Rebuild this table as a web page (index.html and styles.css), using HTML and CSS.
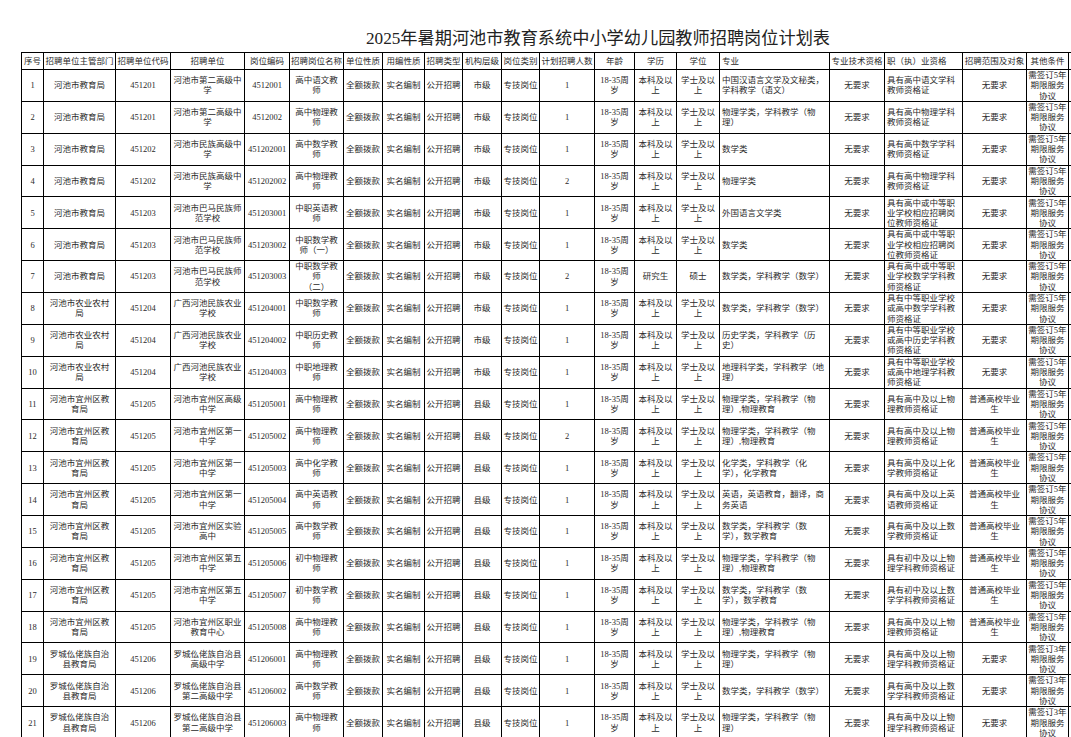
FILE: index.html
```html
<!DOCTYPE html>
<html lang="zh-CN">
<head>
<meta charset="utf-8">
<title>2025年暑期河池市教育系统中小学幼儿园教师招聘岗位计划表</title>
<link rel="stylesheet" href="styles.css">
</head>
<body>
<div class="page">
<h1 class="title">2025年暑期河池市教育系统中小学幼儿园教师招聘岗位计划表</h1>
<table class="plan">
<colgroup>
<col class="w-no"><col class="w-dept"><col class="w-code"><col class="w-unit"><col class="w-pcode"><col class="w-pname"><col class="w-nat"><col class="w-est"><col class="w-type"><col class="w-lvl"><col class="w-cat"><col class="w-num"><col class="w-age"><col class="w-edu"><col class="w-deg"><col class="w-major"><col class="w-tech"><col class="w-qual"><col class="w-scope"><col class="w-other"><col class="w-rest">
</colgroup>
<thead>
<tr><th>序号</th><th>招聘单位主管部门</th><th>招聘单位代码</th><th>招聘单位</th><th>岗位编码</th><th>招聘岗位名称</th><th>单位性质</th><th>用编性质</th><th>招聘类型</th><th>机构层级</th><th>岗位类别</th><th>计划招聘人数</th><th>年龄</th><th>学历</th><th>学位</th><th class="l">专业</th><th>专业技术资格</th><th class="l">职（执）业资格</th><th>招聘范围及对象</th><th>其他条件</th><th></th></tr>
</thead>
<tbody>
<tr><td>1</td><td>河池市教育局</td><td>451201</td><td>河池市第二高级中<br>学</td><td>4512001</td><td>高中语文教<br>师</td><td>全额拨款</td><td>实名编制</td><td>公开招聘</td><td>市级</td><td>专技岗位</td><td>1</td><td>18-35周<br>岁</td><td>本科及以<br>上</td><td>学士及以<br>上</td><td class="l">中国汉语言文学及文秘类，<br>学科教学（语文）</td><td>无要求</td><td class="l">具有高中语文学科<br>教师资格证</td><td>无要求</td><td class="oc">需签订5年<br>期限服务<br>协议</td><td></td></tr>
<tr><td>2</td><td>河池市教育局</td><td>451201</td><td>河池市第二高级中<br>学</td><td>4512002</td><td>高中物理教<br>师</td><td>全额拨款</td><td>实名编制</td><td>公开招聘</td><td>市级</td><td>专技岗位</td><td>1</td><td>18-35周<br>岁</td><td>本科及以<br>上</td><td>学士及以<br>上</td><td class="l">物理学类，学科教学（物<br>理）</td><td>无要求</td><td class="l">具有高中物理学科<br>教师资格证</td><td>无要求</td><td class="oc">需签订5年<br>期限服务<br>协议</td><td></td></tr>
<tr><td>3</td><td>河池市教育局</td><td>451202</td><td>河池市民族高级中<br>学</td><td>451202001</td><td>高中数学教<br>师</td><td>全额拨款</td><td>实名编制</td><td>公开招聘</td><td>市级</td><td>专技岗位</td><td>1</td><td>18-35周<br>岁</td><td>本科及以<br>上</td><td>学士及以<br>上</td><td class="l">数学类</td><td>无要求</td><td class="l">具有高中数学学科<br>教师资格证</td><td>无要求</td><td class="oc">需签订5年<br>期限服务<br>协议</td><td></td></tr>
<tr><td>4</td><td>河池市教育局</td><td>451202</td><td>河池市民族高级中<br>学</td><td>451202002</td><td>高中物理教<br>师</td><td>全额拨款</td><td>实名编制</td><td>公开招聘</td><td>市级</td><td>专技岗位</td><td>2</td><td>18-35周<br>岁</td><td>本科及以<br>上</td><td>学士及以<br>上</td><td class="l">物理学类</td><td>无要求</td><td class="l">具有高中物理学科<br>教师资格证</td><td>无要求</td><td class="oc">需签订5年<br>期限服务<br>协议</td><td></td></tr>
<tr><td>5</td><td>河池市教育局</td><td>451203</td><td>河池市巴马民族师<br>范学校</td><td>451203001</td><td>中职英语教<br>师</td><td>全额拨款</td><td>实名编制</td><td>公开招聘</td><td>市级</td><td>专技岗位</td><td>1</td><td>18-35周<br>岁</td><td>本科及以<br>上</td><td>学士及以<br>上</td><td class="l">外国语言文学类</td><td>无要求</td><td class="l">具有高中或中等职<br>业学校相应招聘岗<br>位教师资格证</td><td>无要求</td><td class="oc">需签订5年<br>期限服务<br>协议</td><td></td></tr>
<tr><td>6</td><td>河池市教育局</td><td>451203</td><td>河池市巴马民族师<br>范学校</td><td>451203002</td><td>中职数学教<br>师（一）</td><td>全额拨款</td><td>实名编制</td><td>公开招聘</td><td>市级</td><td>专技岗位</td><td>1</td><td>18-35周<br>岁</td><td>本科及以<br>上</td><td>学士及以<br>上</td><td class="l">数学类</td><td>无要求</td><td class="l">具有高中或中等职<br>业学校相应招聘岗<br>位教师资格证</td><td>无要求</td><td class="oc">需签订5年<br>期限服务<br>协议</td><td></td></tr>
<tr><td>7</td><td>河池市教育局</td><td>451203</td><td>河池市巴马民族师<br>范学校</td><td>451203003</td><td>中职数学教<br>师<br>（二）</td><td>全额拨款</td><td>实名编制</td><td>公开招聘</td><td>市级</td><td>专技岗位</td><td>2</td><td>18-35周<br>岁</td><td>研究生</td><td>硕士</td><td class="l">数学类，学科教学（数学）</td><td>无要求</td><td class="l">具有高中或中等职<br>业学校数学学科教<br>师资格证</td><td>无要求</td><td class="oc">需签订5年<br>期限服务<br>协议</td><td></td></tr>
<tr><td>8</td><td>河池市农业农村<br>局</td><td>451204</td><td>广西河池民族农业<br>学校</td><td>451204001</td><td>中职数学教<br>师</td><td>全额拨款</td><td>实名编制</td><td>公开招聘</td><td>市级</td><td>专技岗位</td><td>1</td><td>18-35周<br>岁</td><td>本科及以<br>上</td><td>学士及以<br>上</td><td class="l">数学类，学科教学（数学）</td><td>无要求</td><td class="l">具有中等职业学校<br>或高中数学学科教<br>师资格证</td><td>无要求</td><td class="oc">需签订5年<br>期限服务<br>协议</td><td></td></tr>
<tr><td>9</td><td>河池市农业农村<br>局</td><td>451204</td><td>广西河池民族农业<br>学校</td><td>451204002</td><td>中职历史教<br>师</td><td>全额拨款</td><td>实名编制</td><td>公开招聘</td><td>市级</td><td>专技岗位</td><td>1</td><td>18-35周<br>岁</td><td>本科及以<br>上</td><td>学士及以<br>上</td><td class="l">历史学类，学科教学（历<br>史）</td><td>无要求</td><td class="l">具有中等职业学校<br>或高中历史学科教<br>师资格证</td><td>无要求</td><td class="oc">需签订5年<br>期限服务<br>协议</td><td></td></tr>
<tr><td>10</td><td>河池市农业农村<br>局</td><td>451204</td><td>广西河池民族农业<br>学校</td><td>451204003</td><td>中职地理教<br>师</td><td>全额拨款</td><td>实名编制</td><td>公开招聘</td><td>市级</td><td>专技岗位</td><td>1</td><td>18-35周<br>岁</td><td>本科及以<br>上</td><td>学士及以<br>上</td><td class="l">地理科学类，学科教学（地<br>理）</td><td>无要求</td><td class="l">具有中等职业学校<br>或高中地理学科教<br>师资格证</td><td>无要求</td><td class="oc">需签订5年<br>期限服务<br>协议</td><td></td></tr>
<tr><td>11</td><td>河池市宜州区教<br>育局</td><td>451205</td><td>河池市宜州区高级<br>中学</td><td>451205001</td><td>高中物理教<br>师</td><td>全额拨款</td><td>实名编制</td><td>公开招聘</td><td>县级</td><td>专技岗位</td><td>1</td><td>18-35周<br>岁</td><td>本科及以<br>上</td><td>学士及以<br>上</td><td class="l">物理学类，学科教学（物<br>理）,物理教育</td><td>无要求</td><td class="l">具有高中及以上物<br>理教师资格证</td><td>普通高校毕业<br>生</td><td class="oc">需签订5年<br>期限服务<br>协议</td><td></td></tr>
<tr><td>12</td><td>河池市宜州区教<br>育局</td><td>451205</td><td>河池市宜州区第一<br>中学</td><td>451205002</td><td>高中物理教<br>师</td><td>全额拨款</td><td>实名编制</td><td>公开招聘</td><td>县级</td><td>专技岗位</td><td>2</td><td>18-35周<br>岁</td><td>本科及以<br>上</td><td>学士及以<br>上</td><td class="l">物理学类，学科教学（物<br>理）,物理教育</td><td>无要求</td><td class="l">具有高中及以上物<br>理教师资格证</td><td>普通高校毕业<br>生</td><td class="oc">需签订5年<br>期限服务<br>协议</td><td></td></tr>
<tr><td>13</td><td>河池市宜州区教<br>育局</td><td>451205</td><td>河池市宜州区第一<br>中学</td><td>451205003</td><td>高中化学教<br>师</td><td>全额拨款</td><td>实名编制</td><td>公开招聘</td><td>县级</td><td>专技岗位</td><td>1</td><td>18-35周<br>岁</td><td>本科及以<br>上</td><td>学士及以<br>上</td><td class="l">化学类，学科教学（化<br>学），化学教育</td><td>无要求</td><td class="l">具有高中及以上化<br>学教师资格证</td><td>普通高校毕业<br>生</td><td class="oc">需签订5年<br>期限服务<br>协议</td><td></td></tr>
<tr><td>14</td><td>河池市宜州区教<br>育局</td><td>451205</td><td>河池市宜州区第一<br>中学</td><td>451205004</td><td>高中英语教<br>师</td><td>全额拨款</td><td>实名编制</td><td>公开招聘</td><td>县级</td><td>专技岗位</td><td>1</td><td>18-35周<br>岁</td><td>本科及以<br>上</td><td>学士及以<br>上</td><td class="l">英语，英语教育，翻译，商<br>务英语</td><td>无要求</td><td class="l">具有高中及以上英<br>语教师资格证</td><td>普通高校毕业<br>生</td><td class="oc">需签订5年<br>期限服务<br>协议</td><td></td></tr>
<tr><td>15</td><td>河池市宜州区教<br>育局</td><td>451205</td><td>河池市宜州区实验<br>高中</td><td>451205005</td><td>高中数学教<br>师</td><td>全额拨款</td><td>实名编制</td><td>公开招聘</td><td>县级</td><td>专技岗位</td><td>1</td><td>18-35周<br>岁</td><td>本科及以<br>上</td><td>学士及以<br>上</td><td class="l">数学类，学科教学（数<br>学），数学教育</td><td>无要求</td><td class="l">具有高中及以上数<br>学教师资格证</td><td>普通高校毕业<br>生</td><td class="oc">需签订5年<br>期限服务<br>协议</td><td></td></tr>
<tr><td>16</td><td>河池市宜州区教<br>育局</td><td>451205</td><td>河池市宜州区第五<br>中学</td><td>451205006</td><td>初中物理教<br>师</td><td>全额拨款</td><td>实名编制</td><td>公开招聘</td><td>县级</td><td>专技岗位</td><td>1</td><td>18-35周<br>岁</td><td>本科及以<br>上</td><td>学士及以<br>上</td><td class="l">物理学类，学科教学（物<br>理）,物理教育</td><td>无要求</td><td class="l">具有初中及以上物<br>理学科教师资格证</td><td>普通高校毕业<br>生</td><td class="oc">需签订5年<br>期限服务<br>协议</td><td></td></tr>
<tr><td>17</td><td>河池市宜州区教<br>育局</td><td>451205</td><td>河池市宜州区第五<br>中学</td><td>451205007</td><td>初中数学教<br>师</td><td>全额拨款</td><td>实名编制</td><td>公开招聘</td><td>县级</td><td>专技岗位</td><td>1</td><td>18-35周<br>岁</td><td>本科及以<br>上</td><td>学士及以<br>上</td><td class="l">数学类，学科教学（数<br>学），数学教育</td><td>无要求</td><td class="l">具有初中及以上数<br>学学科教师资格证</td><td>普通高校毕业<br>生</td><td class="oc">需签订5年<br>期限服务<br>协议</td><td></td></tr>
<tr><td>18</td><td>河池市宜州区教<br>育局</td><td>451205</td><td>河池市宜州区职业<br>教育中心</td><td>451205008</td><td>高中物理教<br>师</td><td>全额拨款</td><td>实名编制</td><td>公开招聘</td><td>县级</td><td>专技岗位</td><td>1</td><td>18-35周<br>岁</td><td>本科及以<br>上</td><td>学士及以<br>上</td><td class="l">物理学类，学科教学（物<br>理）,物理教育</td><td>无要求</td><td class="l">具有高中及以上物<br>理教师资格证</td><td>普通高校毕业<br>生</td><td class="oc">需签订5年<br>期限服务<br>协议</td><td></td></tr>
<tr><td>19</td><td>罗城仫佬族自治<br>县教育局</td><td>451206</td><td>罗城仫佬族自治县<br>高级中学</td><td>451206001</td><td>高中物理教<br>师</td><td>全额拨款</td><td>实名编制</td><td>公开招聘</td><td>县级</td><td>专技岗位</td><td>1</td><td>18-35周<br>岁</td><td>本科及以<br>上</td><td>学士及以<br>上</td><td class="l">物理学类，学科教学（物<br>理）</td><td>无要求</td><td class="l">具有高中及以上物<br>理学科教师资格证</td><td>无要求</td><td class="oc">需签订3年<br>期限服务<br>协议</td><td></td></tr>
<tr><td>20</td><td>罗城仫佬族自治<br>县教育局</td><td>451206</td><td>罗城仫佬族自治县<br>第二高级中学</td><td>451206002</td><td>高中数学教<br>师</td><td>全额拨款</td><td>实名编制</td><td>公开招聘</td><td>县级</td><td>专技岗位</td><td>1</td><td>18-35周<br>岁</td><td>本科及以<br>上</td><td>学士及以<br>上</td><td class="l">数学类，学科教学（数学）</td><td>无要求</td><td class="l">具有高中及以上数<br>学学科教师资格证</td><td>无要求</td><td class="oc">需签订3年<br>期限服务<br>协议</td><td></td></tr>
<tr><td>21</td><td>罗城仫佬族自治<br>县教育局</td><td>451206</td><td>罗城仫佬族自治县<br>第二高级中学</td><td>451206003</td><td>高中物理教<br>师</td><td>全额拨款</td><td>实名编制</td><td>公开招聘</td><td>县级</td><td>专技岗位</td><td>1</td><td>18-35周<br>岁</td><td>本科及以<br>上</td><td>学士及以<br>上</td><td class="l">物理学类，学科教学（物<br>理）</td><td>无要求</td><td class="l">具有高中及以上物<br>理学科教师资格证</td><td>无要求</td><td class="oc">需签订3年<br>期限服务<br>协议</td><td></td></tr>
</tbody>
</table>
</div>
</body>
</html>
```

FILE: styles.css
```css
html, body {
  margin: 0;
  padding: 0;
  overflow: hidden;
  background: #fff;
}

body {
  font-family: "Liberation Serif", "Noto Sans CJK SC", serif;
  color: #2a2a2a;
}

.page {
  padding: 29px 0 0 21px;
  width: 1154px;
}

.title {
  margin: 0 0 3px;
  font-size: 17.2px;
  line-height: 20px;
  font-weight: normal;
  text-align: center;
  color: #222;
}

.plan {
  border-collapse: collapse;
  table-layout: fixed;
  width: 1154px;
  font-size: 8.5px;
  line-height: 10.2px;
}

.plan th,
.plan td {
  border: 1px solid #000;
  padding: 0 1px;
  text-align: center;
  vertical-align: middle;
  white-space: nowrap;
  overflow: hidden;
  font-weight: normal;
}

.plan thead tr {
  height: 17px;
}

.plan thead th {
  height: 15px;
}

.plan tbody tr {
  height: 31.87px;
}

.plan tbody td {
  height: 30.87px;
}

.plan .l {
  text-align: left;
  padding-left: 2px;
}

.plan .oc {
  padding: 0;
}

.w-no { width: 22px; }
.w-dept { width: 72px; }
.w-code { width: 55px; }
.w-unit { width: 74px; }
.w-pcode { width: 45px; }
.w-pname { width: 54px; }
.w-nat { width: 39px; }
.w-est { width: 42px; }
.w-type { width: 38px; }
.w-lvl { width: 39px; }
.w-cat { width: 38px; }
.w-num { width: 55px; }
.w-age { width: 40px; }
.w-edu { width: 42px; }
.w-deg { width: 43px; }
.w-major { width: 110px; }
.w-tech { width: 55px; }
.w-qual { width: 78px; }
.w-scope { width: 64px; }
.w-other { width: 42px; }
.w-rest { width: 107px; }
```
